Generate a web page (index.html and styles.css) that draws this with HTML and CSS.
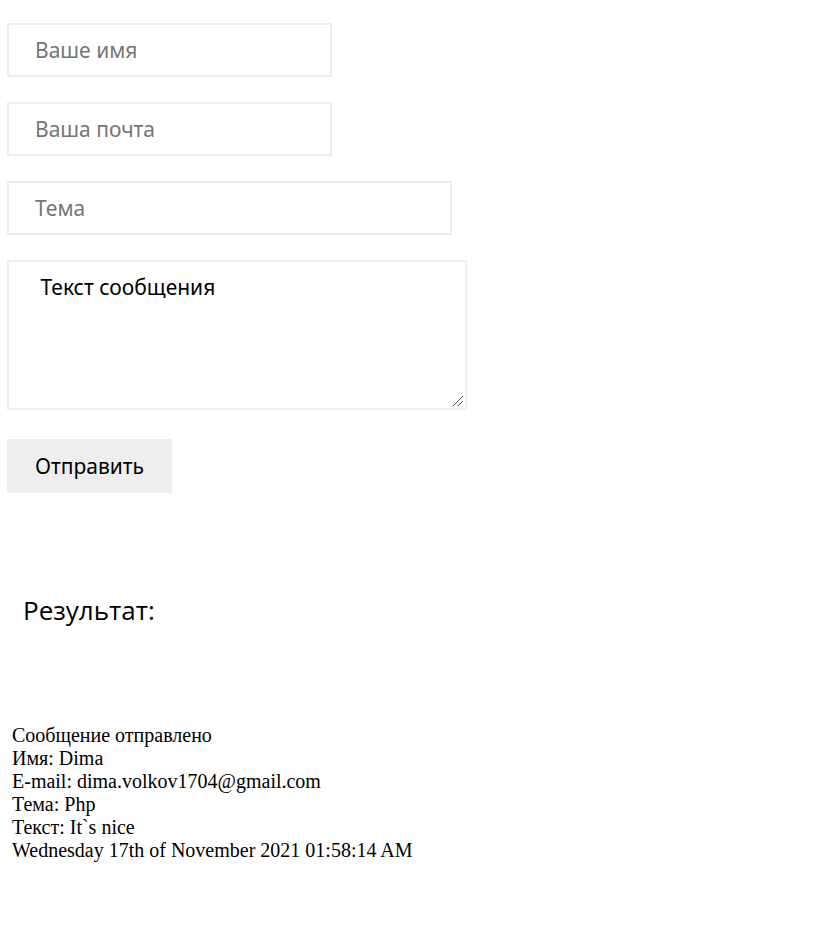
FILE: index.html
```html
<!DOCTYPE html>
<html lang="ru">
<head>
<meta charset="utf-8">
<title>Форма</title>
<link rel="stylesheet" href="styles.css">
</head>
<body>
<form class="form">
<input class="field" type="text" placeholder="Ваше имя" aria-label="Ваше имя">
<input class="field" type="email" placeholder="Ваша почта" aria-label="Ваша почта">
<input class="field field-subject" type="text" placeholder="Тема" aria-label="Тема">
<textarea class="field field-message" aria-label="Текст сообщения"> Текст сообщения</textarea>
<button class="submit" type="submit">Отправить</button>
</form>
<h2 class="title">Результат:</h2>
<p class="result">Сообщение отправлено<br>Имя: Dima<br>E-mail: dima.volkov1704@gmail.com<br>Тема: Php<br>Текст: It`s nice<br>Wednesday 17th of November 2021 01:58:14 AM</p>
</body>
</html>
```
FILE: styles.css
```css
* { box-sizing: border-box; }
body {
  margin: 0;
  padding: 23px 7px;
  background: #fff;
  color: #000;
}
.form {
  display: flex;
  flex-direction: column;
  align-items: flex-start;
  gap: 25px;
}
.field, .submit {
  max-width: 100%;
  margin: 0;
  border: 2px solid #eee;
  border-radius: 0;
  padding: 12px 26px;
  font: 21px/26px "Noto Sans", sans-serif;
  color: #000;
  background: #fff;
}
.field {
  width: 325px;
  height: 54px;
}
.field::placeholder { color: #757575; }
.field-subject { width: 445px; }
.field-message {
  width: 460px;
  height: 150px;
}
.field-message::-webkit-resizer {
  background: url("data:image/svg+xml,%3Csvg xmlns='http://www.w3.org/2000/svg' width='15' height='15'%3E%3Cpath d='M3 13L13 3M8 13L13 8' stroke='%23555'/%3E%3C/svg%3E") no-repeat right bottom;
}
.submit {
  margin-top: 4px;
  background: #eee;
}
.title {
  margin: 99px 16px 0;
  font: 26px/36px "Open Sans", "Noto Sans", sans-serif;
}
.result {
  margin: 96px 5px 0;
  font: 20px/23px "Liberation Serif", serif;
}
```
